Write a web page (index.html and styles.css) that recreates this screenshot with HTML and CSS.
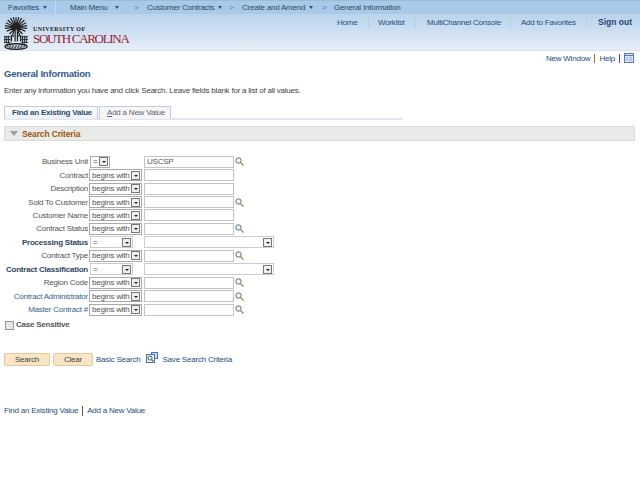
FILE: index.html
```html
<!DOCTYPE html>
<html lang="en">
<head>
<meta charset="utf-8">
<title>General Information</title>
<link rel="stylesheet" href="styles.css">
</head>
<body>
<header class="hdr">
  <nav class="crumbs">
    <span class="crumb c-fav">Favorites <i class="dn"></i></span>
    <span class="crumb c-main">Main Menu <i class="dn"></i></span>
    <span class="sep s1">&gt;</span>
    <span class="crumb c-cust">Customer Contracts <i class="dn"></i></span>
    <span class="sep s1">&gt;</span>
    <span class="crumb c-create">Create and Amend <i class="dn"></i></span>
    <span class="sep s3">&gt;</span>
    <span class="crumb">General Information</span>
  </nav>
  <div class="brandrow">
    <div class="brand">
      <svg class="palm" width="27" height="35" viewBox="0 0 29 37" aria-hidden="true">
        <g stroke="#222" stroke-width="1.300" fill="none">
          <path d="M14 12L14 1M14 12L11 1M14 12L17 1M14 12L8 2M14 12L20 2M14 12L5 4M14 12L23 4M14 12L3 7M14 12L25 7M14 12L2 10M14 12L26 10M14 12L2 13M14 12L26 13M14 12L4 16M14 12L24 16M14 12L7 19M14 12L21 19M14 12L10 20M14 12L18 20"/>
          <path d="M13 12V27M15.500 12V27" stroke-width="1.300"/>
          <path d="M1 22H8M1 25H8M1 28H8M2 21V29M4 21V29M6 21V29M20 22H27M20 25H27M20 28H27M21 21V29M23 21V29M25 21V29" stroke-width="1"/>
          <path d="M9 27V21H12M19 27V21H16" stroke-width="1.500"/>
          <ellipse cx="14" cy="32.500" rx="12" ry="3" stroke-width="1.400"/>
          <path d="M4 32H24M6 34H22" stroke-dasharray="2 1"/>
        </g>
      </svg>
      <div class="wordmark">
        <span class="wm1">UNIVERSITY OF</span>
        <span class="wm2">SOUTH CAROLINA</span>
      </div>
    </div>
    <div class="hlinks">
      <a class="hl h-home">Home</a><a class="hl h-work">Worklist</a><a class="hl h-multi">MultiChannel Console</a><a class="hl h-fav">Add to Favorites</a><a class="hl signout">Sign out</a>
    </div>
  </div>
</header>

<div class="pagetools">
  <a>New Window</a><span class="bar orange"></span><a>Help</a><span class="bar purple"></span>
  <svg width="10" height="10" viewBox="0 0 10 10" aria-hidden="true"><rect x="0.500" y="0.500" width="9" height="9" fill="#dbe6f4" stroke="#5577bb"/><path d="M1 2.500H9" stroke="#5577bb"/><path d="M2 5H4M2 7H4M5 5H8M5 7H8" stroke="#99aacc"/></svg>
</div>

<main class="content">
  <h1 class="title">General Information</h1>
  <p class="intro">Enter any information you have and click Search. Leave fields blank for a list of all values.</p>

  <div class="tabs">
    <span class="tab active">Find an Existing Value</span>
    <span class="tab second"><u>A</u>dd a New Value</span>
  </div>

  <div class="section"><i class="tri"></i>Search Criteria</div>

  <div class="form">
    <label class="lbl">Business Unit</label><div class="sel eq"><span>=</span><i class="arr"></i></div><input class="inp" value="USCSP"><svg class="mag" viewBox="0 0 9 9"><use href="#m"/></svg>
    <label class="lbl">Contract</label><div class="sel bw"><span>begins with</span><i class="arr"></i></div><input class="inp"><b></b>
    <label class="lbl">Description</label><div class="sel bw"><span>begins with</span><i class="arr"></i></div><input class="inp"><b></b>
    <label class="lbl">Sold To Customer</label><div class="sel bw"><span>begins with</span><i class="arr"></i></div><input class="inp"><svg class="mag" viewBox="0 0 9 9"><use href="#m"/></svg>
    <label class="lbl">Customer Name</label><div class="sel bw"><span>begins with</span><i class="arr"></i></div><input class="inp"><b></b>
    <label class="lbl">Contract Status</label><div class="sel bw"><span>begins with</span><i class="arr"></i></div><input class="inp"><svg class="mag" viewBox="0 0 9 9"><use href="#m"/></svg>
    <label class="lbl strong">Processing Status</label><div class="sel flat opw"><span>=</span><i class="arr"></i></div><div class="sel flat wide"><span></span><i class="arr"></i></div>
    <label class="lbl">Contract Type</label><div class="sel bw"><span>begins with</span><i class="arr"></i></div><input class="inp"><svg class="mag" viewBox="0 0 9 9"><use href="#m"/></svg>
    <label class="lbl strong">Contract Classification</label><div class="sel flat opw"><span>=</span><i class="arr"></i></div><div class="sel flat wide"><span></span><i class="arr"></i></div>
    <label class="lbl">Region Code</label><div class="sel bw"><span>begins with</span><i class="arr"></i></div><input class="inp"><svg class="mag" viewBox="0 0 9 9"><use href="#m"/></svg>
    <label class="lbl link">Contract Administrator</label><div class="sel bw"><span>begins with</span><i class="arr"></i></div><input class="inp"><svg class="mag" viewBox="0 0 9 9"><use href="#m"/></svg>
    <label class="lbl link">Master Contract #</label><div class="sel bw"><span>begins with</span><i class="arr"></i></div><input class="inp"><svg class="mag" viewBox="0 0 9 9"><use href="#m"/></svg>
  </div>

  <div class="case"><i class="chk"></i><span>Case Sensitive</span></div>

  <div class="actions">
    <button class="btn b-search">Search</button>
    <button class="btn b-clear">Clear</button>
    <a class="basic">Basic Search</a>
    <svg class="saveico" width="12" height="12" viewBox="0 0 12 12" aria-hidden="true"><rect x="5.500" y="0.500" width="6" height="6" fill="#cfe0f2" stroke="#4477aa"/><rect x="0.500" y="2.500" width="8" height="8" fill="#e8f0f8" stroke="#4477aa"/><circle cx="4" cy="6" r="2" fill="#fff" stroke="#555"/><path d="M5.500 7.500L7.500 9.500" stroke="#8a6a20" stroke-width="1.200"/></svg>
    <a class="save">Save Search Criteria</a>
  </div>

  <div class="footlinks"><a>Find an Existing Value</a><span class="bar olive"></span><a>Add a New Value</a></div>
</main>

<svg class="defs" width="0" height="0" aria-hidden="true"><defs><g id="m"><circle cx="3.500" cy="3.500" r="2.700" fill="#eef4f8" stroke="#5c6c78" stroke-width="1"/><path d="M5.500 5.500L8.500 8.500" stroke="#a08440" stroke-width="1.300"/></g></defs></svg>
</body>
</html>
```
FILE: styles.css
```css
* { box-sizing: border-box; }
html, body { margin: 0; padding: 0; }
body { width: 640px; height: 480px; overflow: hidden; background: #fff; font-family: "Liberation Sans", Arial, sans-serif; font-size: 8px; letter-spacing: -0.220px; color: #333; }
.defs { position: absolute; }
i { display: block; }

.hdr { height: 51px; background: linear-gradient(#b6d1ec 14px, #bcd4ec 16px, #d3e3f3 36px, #e0ebf6 45px, #e6eef7 50px); border-bottom: 1px solid #dcdfe6; }
.crumbs { height: 15px; display: flex; align-items: center; background: #a9c9e8; border-top: 1px solid #9dbcd6; border-bottom: 1px solid #bcd4ec; color: #2f4a66; white-space: nowrap; }
.crumb { display: inline-flex; align-items: center; gap: 3px; }
.c-fav { margin-left: 8px; width: 48px; height: 100%; border-right: 1px solid #c9dcef; }
.c-main { margin-left: 14px; width: 64px; gap: 6px; }
.c-cust { width: 82px; }
.c-create { width: 80px; }
.sep { color: #5f7f9e; }
.s1 { width: 13px; }
.s3 { width: 12px; }
.dn { width: 0; height: 0; border: 2.500px solid transparent; border-top: 3px solid #3a5570; border-bottom: 0; margin-left: 1px; }

.brandrow { height: 35px; display: flex; justify-content: space-between; align-items: flex-start; }
.brand { display: flex; margin: 1px 0 0 3px; }
.palm { display: block; margin-right: 2px; }
.wordmark { display: flex; flex-direction: column; margin: 10px 0 0 1px; font-family: "Liberation Serif", serif; letter-spacing: 0; }
.wm1 { font-size: 6px; line-height: 7px; color: #222; letter-spacing: 0.400px; font-weight: bold; }
.wm2 { font-size: 13px; line-height: 12px; color: #9a1d35; letter-spacing: -1.300px; white-space: nowrap; }
.hlinks { display: flex; margin-top: 2px; }
.hl { color: #234f83; line-height: 11px; border-right: 1px solid #b7cde3; white-space: nowrap; }
.h-home { width: 32px; }
.h-work { width: 47px; padding-left: 9px; }
.h-multi { width: 95px; padding-left: 11px; }
.h-fav { width: 76px; padding-left: 10px; }
.signout { border-right: 0; font-weight: bold; font-size: 8.500px; width: 53px; padding-left: 11px; color: #1f4672; letter-spacing: 0; }

.pagetools { height: 13px; display: flex; justify-content: flex-end; align-items: center; padding: 1px 6px 0 0; color: #234f83; }
.bar { display: inline-block; width: 1px; height: 9px; margin: 0 4px; }
.orange { background: #b5651d; }
.purple { background: #5a3d99; }
.olive { background: #5a5a30; height: 10px; }

.content { padding: 0 0 0 4px; }
.title { margin: 4px 0 0; font-size: 9.500px; line-height: 12px; color: #2d5a8c; font-weight: bold; letter-spacing: -0.200px; }
.intro { margin: 5px 0 0; line-height: 11px; color: #444; }

.tabs { margin-top: 10px; width: 399px; height: 14px; display: flex; gap: 1px; border-bottom: 2px solid #dde7f0; }
.tab { height: 13px; padding: 0 7px; line-height: 12px; color: #5a6570; background: #f6f6f6; border: 1px solid #c5ccd3; border-bottom: 0; white-space: nowrap; }
.tab.active { width: 94px; color: #2c4a6c; font-weight: bold; background: linear-gradient(#fff, #eaf1f8); }
.tab.second { width: 72px; }

.section { margin-top: 6px; width: 631px; height: 15px; background: #e9ebe8; border: 1px solid #d6dcd6; display: flex; align-items: center; font-weight: bold; font-size: 8.500px; letter-spacing: -0.150px; color: #9a5a14; }
.tri { width: 0; height: 0; margin: 0 4px 0 5px; border: 4px solid transparent; border-top: 5px solid #9aa09f; border-bottom: 0; }

.form { margin: 14px 0 0; display: grid; grid-template-columns: 85px 55px 90px 10px; grid-auto-rows: 13.450px; align-items: center; }
.lbl { text-align: right; padding-right: 1px; white-space: nowrap; color: #555; line-height: 11px; }
.lbl.strong { font-weight: bold; color: #2f4660; }
.lbl.link { color: #36638f; }
.sel { height: 12px; background: #fff; border: 1px solid #aaa; display: flex; justify-content: space-between; align-items: center; padding: 0 1px 0 2px; color: #555; white-space: nowrap; }
.bw { width: 53px; }
.eq { width: 20px; margin-left: 1px; }
.flat { border-color: #ccc; }
.opw { width: 43px; margin-left: 1px; }
.wide { width: 130px; grid-column: span 2; }
.arr { flex: none; width: 9px; height: 9px; background: #eee; border: 1px solid #777; position: relative; }
.arr::after { content: ""; position: absolute; left: 1.500px; top: 3px; border: 2px solid transparent; border-top: 2px solid #222; border-bottom: 0; }
.inp { width: 90px; height: 12px; border: 1px solid #c4c4c4; padding: 0 2px; margin: 0; font: 8px "Liberation Sans", Arial, sans-serif; letter-spacing: -0.220px; color: #555; background: #fff; outline: 0; }
.mag { width: 9px; height: 9px; margin-left: 1px; display: block; }

.case { margin: 3px 0 0 1px; display: flex; align-items: center; gap: 1px; font-weight: bold; color: #555; line-height: 12px; }
.chk { width: 9px; height: 9px; border: 1px solid #999; background: #e6e6e6; margin-right: 1px; }

.actions { margin-top: 21px; display: flex; align-items: center; height: 15px; color: #234f83; }
.btn { height: 13px; padding: 0; margin-right: 3px; font: 8px "Liberation Sans", Arial, sans-serif; letter-spacing: -0.220px; color: #444; background: #fae6c4; border: 1px solid #e8c79c; border-radius: 2px; }
.b-search { width: 46px; }
.b-clear { width: 40px; }
.basic { margin-right: 5px; }
.saveico { margin: -4px 5px 0 0; }

.footlinks { margin-top: 38px; display: flex; align-items: center; color: #234f83; line-height: 11px; }
```
